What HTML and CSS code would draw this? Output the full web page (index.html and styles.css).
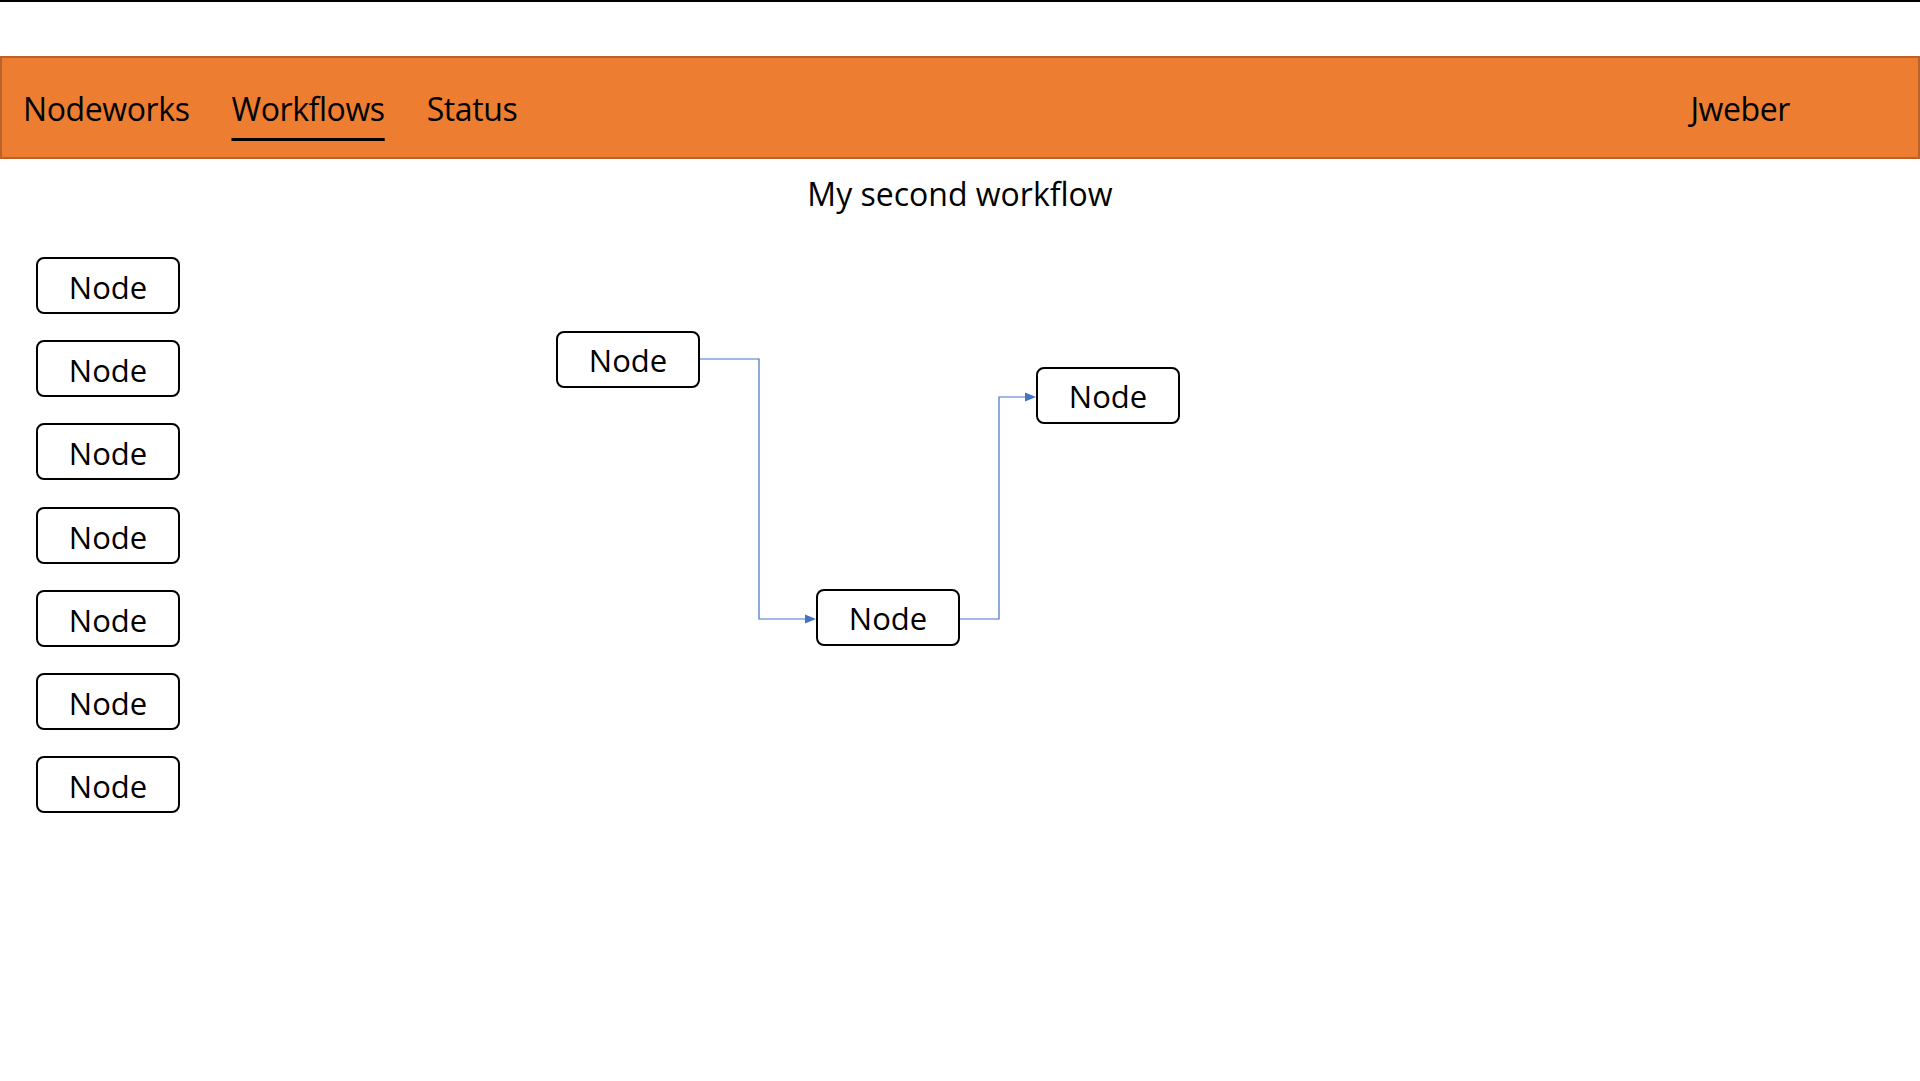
FILE: index.html
```html
<!DOCTYPE html>
<html lang="en">
<head>
<meta charset="utf-8">
<title>Nodeworks - Workflows</title>
<link rel="stylesheet" href="styles.css">
</head>
<body>
<div class="topline"></div>
<header class="navbar">
  <nav class="nav-left">
    <span class="nav-item">Nodeworks</span>
    <span class="nav-item active">Workflows</span>
    <span class="nav-item">Status</span>
  </nav>
  <div class="nav-user">Jweber</div>
</header>
<h1 class="title">My second workflow</h1>
<main class="workspace">
  <aside class="palette">
    <div class="node">Node</div>
    <div class="node">Node</div>
    <div class="node">Node</div>
    <div class="node">Node</div>
    <div class="node">Node</div>
    <div class="node">Node</div>
    <div class="node">Node</div>
  </aside>
  <section class="canvas">
    <svg class="wires" width="1704" height="600" viewBox="0 0 1704 600">
      <polyline points="484,129 543,129 543,389 590,389" fill="none" stroke="#4472c4" stroke-width="1.2"/>
      <polygon points="600,389 589,384.5 589,393.5" fill="#4472c4"/>
      <polyline points="744,389 783,389 783,167 810,167" fill="none" stroke="#4472c4" stroke-width="1.2"/>
      <polygon points="820,167 809,162.5 809,171.5" fill="#4472c4"/>
    </svg>
    <div class="node placed" style="left:340px;top:101px">Node</div>
    <div class="node placed" style="left:600px;top:359px">Node</div>
    <div class="node placed" style="left:820px;top:137px">Node</div>
  </section>
</main>
</body>
</html>
```

FILE: styles.css
```css
html, body {
  margin: 0;
  padding: 0;
  background: #ffffff;
  color: #000000;
  font-family: "Open Sans", "Noto Sans", sans-serif;
}

.topline {
  height: 2px;
  background: #000000;
}

.navbar {
  margin-top: 54px;
  height: 103px;
  box-sizing: border-box;
  background: #ed7d31;
  border: 2px solid #b9622a;
  display: flex;
  align-items: center;
  justify-content: space-between;
  padding: 2px 128px 0 21px;
}

.nav-left {
  display: flex;
  gap: 42px;
}

.nav-item,
.nav-user {
  font-size: 32px;
  line-height: 1;
  letter-spacing: -0.4px;
}

.nav-item.active {
  text-decoration: underline;
  text-decoration-thickness: 3px;
  text-underline-offset: 17px;
}

.title {
  margin: 0;
  height: 71px;
  box-sizing: border-box;
  padding-top: 15px;
  text-align: center;
  font-size: 32px;
  font-weight: normal;
  line-height: 40px;
}

.workspace {
  display: flex;
}

.palette {
  width: 216px;
  box-sizing: border-box;
  padding: 27px 0 0 36px;
  display: flex;
  flex-direction: column;
  gap: 26.2px;
}

.canvas {
  position: relative;
  flex: 1;
  height: 600px;
}

.wires {
  position: absolute;
  left: 0;
  top: 0;
}

.node {
  width: 144px;
  height: 57px;
  box-sizing: border-box;
  border: 2px solid #000000;
  border-radius: 8px;
  background: #ffffff;
  display: flex;
  align-items: center;
  justify-content: center;
  padding-top: 3px;
  font-size: 31px;
}

.node.placed {
  position: absolute;
  padding-top: 0;
}
```
